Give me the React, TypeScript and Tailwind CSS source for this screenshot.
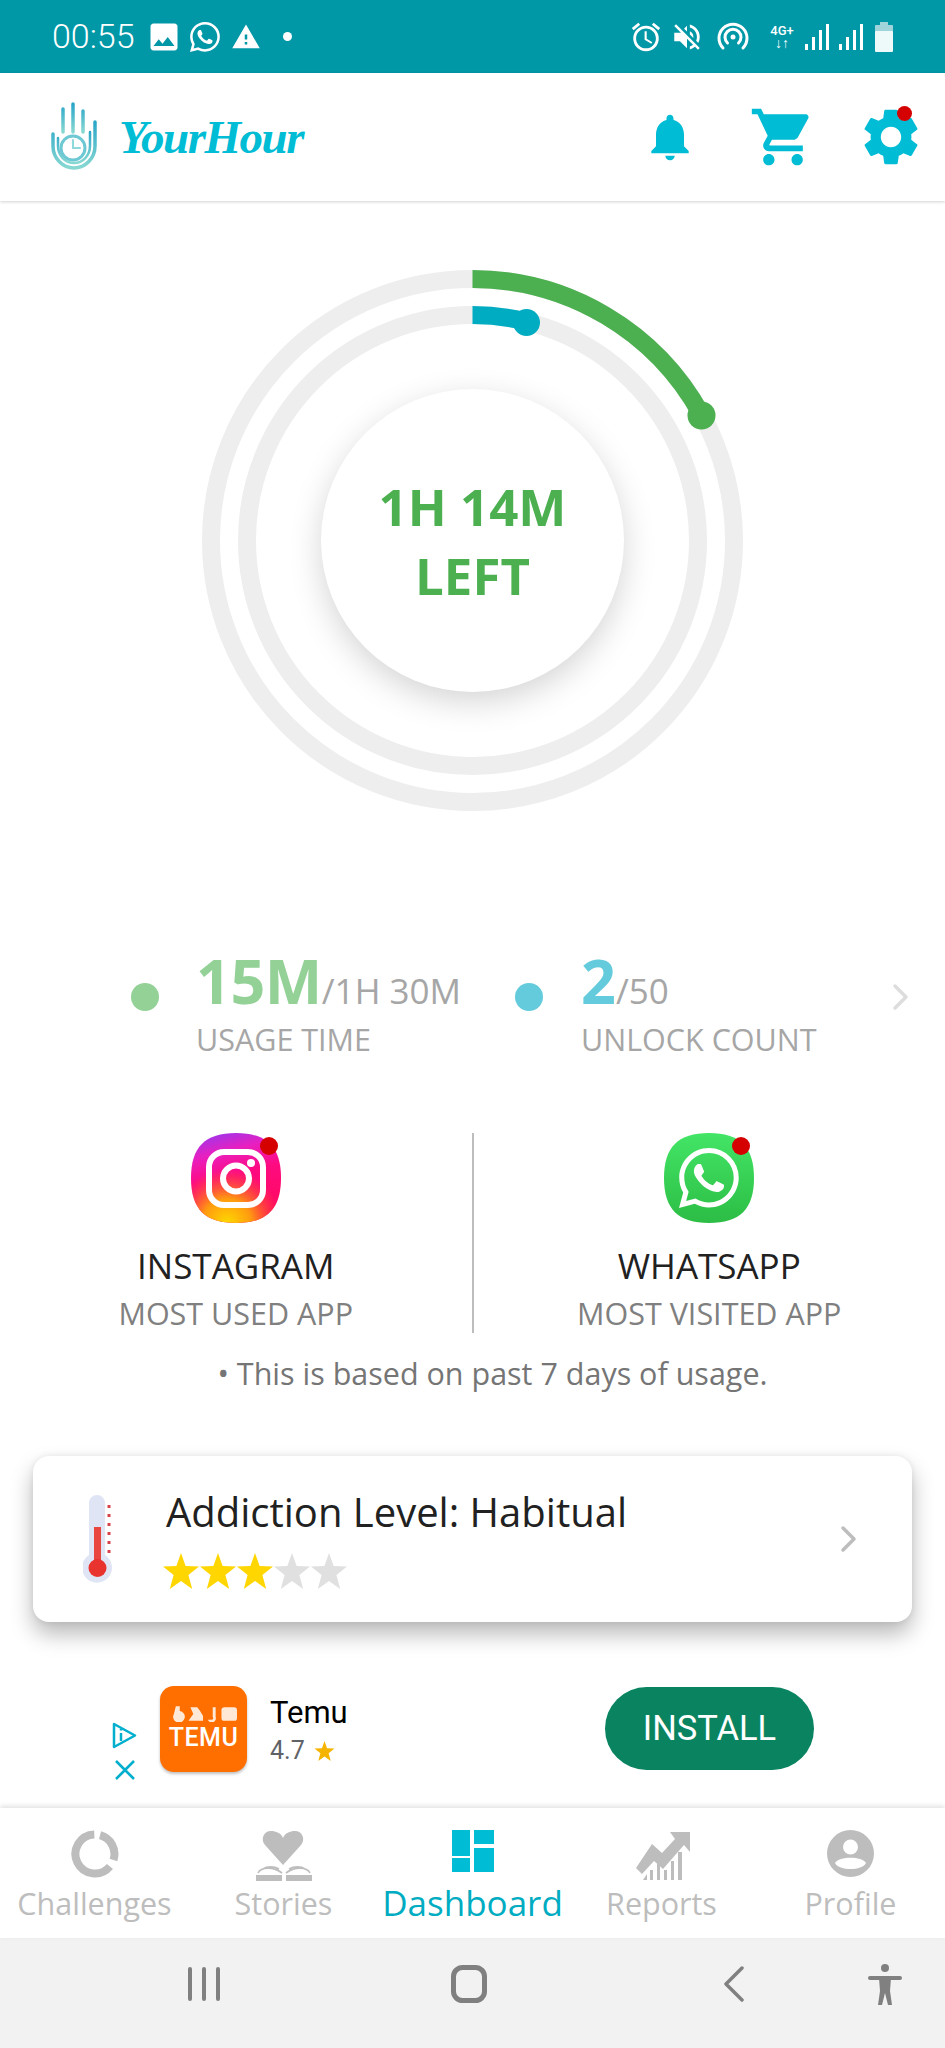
import { BsWhatsapp } from "react-icons/bs";
import {
  MdAccessAlarm,
  MdImage,
  MdNotifications,
  MdSettings,
  MdShoppingCart,
  MdVolumeOff,
  MdWarning,
} from "react-icons/md";

const Chevron = ({ color }: { color: string }) => (
  <svg width="18" height="28" viewBox="0 0 18 28" fill="none">
    <path d="M3 3 L14 14 L3 25" stroke={color} strokeWidth="3.5" strokeLinecap="round" strokeLinejoin="round" />
  </svg>
);

const Star = ({ color }: { color: string }) => (
  <svg width="38" height="36" viewBox="0 0 36 36" className="-mr-[1px] shrink-0">
    <polygon points="18,0 22.6,13 36,13.6 25.4,22 29.2,36 18,28 6.8,36 10.6,22 0,13.6 13.4,13" fill={color} />
  </svg>
);

function StatusBar() {
  return (
    <div className="h-[73px] bg-[#0097a7] flex items-center text-white shrink-0 pl-[52px] pr-[52px]">
      <span className="text-[34px] font-['Roboto',sans-serif] font-light w-[94px] whitespace-nowrap">00:55</span>
      <MdImage size={36} />
      <BsWhatsapp size={30} className="ml-[8px]" />
      <MdWarning size={30} className="ml-[11px]" />
      <span className="w-[9px] h-[9px] rounded-full bg-white ml-[22px]" />
      <div className="ml-auto flex items-center">
        <MdAccessAlarm size={34} />
        <MdVolumeOff size={34} className="ml-[7px]" />
        <svg width="34" height="30" viewBox="0 0 34 30" fill="none" stroke="white" strokeWidth="3" className="ml-[12px]">
          <path d="M7 26 A14 14 0 1 1 27 26" strokeLinecap="round" />
          <path d="M11.5 21 A8 8 0 1 1 22.5 21" strokeLinecap="round" />
          <circle cx="17" cy="15" r="2.5" fill="white" stroke="none" />
        </svg>
        <div className="ml-[17px] w-[30px] flex flex-col items-center font-['Roboto',sans-serif] leading-none">
          <span className="text-[13px] font-medium">4G+</span>
          <span className="text-[14px] font-bold leading-[13px]">↓↑</span>
        </div>
        <svg width="58" height="28" viewBox="0 0 58 28" fill="white" className="ml-[8px]">
          <rect x="0" y="21" width="3" height="6" />
          <rect x="7" y="14" width="3" height="13" />
          <rect x="14" y="7" width="3" height="20" />
          <rect x="21" y="1" width="3" height="26" />
          <rect x="34" y="21" width="3" height="6" />
          <rect x="41" y="14" width="3" height="13" />
          <rect x="48" y="7" width="3" height="20" />
          <rect x="55" y="1" width="3" height="26" />
        </svg>
        <svg width="18" height="30" viewBox="0 0 18 30" className="ml-[12px]">
          <rect x="5" y="0" width="8" height="4" fill="#9fd4da" />
          <rect x="0" y="3" width="18" height="7" rx="1" fill="#9fd4da" />
          <rect x="0" y="9" width="18" height="21" rx="1" fill="#eef9fa" />
        </svg>
      </div>
    </div>
  );
}

function Header() {
  return (
    <div className="relative z-10 h-[128px] shrink-0 bg-white flex items-center pl-[50px] pr-[20px] shadow-[0_1px_3px_rgba(0,0,0,0.18)]">
      <svg width="50" height="70" viewBox="0 0 50 70" fill="none" strokeLinecap="round" className="-mt-[1px]">
        <defs>
          <linearGradient id="hand" x1="0" y1="0" x2="0" y2="1">
            <stop offset="0" stopColor="#2aa6c8" />
            <stop offset="1" stopColor="#88d8d2" />
          </linearGradient>
        </defs>
        <g stroke="url(#hand)" strokeWidth="3.5">
          <path d="M13 7 V30 M23 2 V30 M33 9 V30" />
          <path d="M3 32 V44 A21 22 0 0 0 45 44 V20" />
          <path d="M8 36 V44 A16 17 0 0 0 40 44 V30" strokeWidth="2.5" />
        </g>
        <circle cx="23" cy="46" r="12" stroke="#6cc8d2" strokeWidth="3" />
        <path d="M23 38 V46 H30" stroke="#8fd8dc" strokeWidth="2" />
      </svg>
      <span className="ml-[19px] text-[#00bcd4] font-['Liberation_Serif',serif] italic font-bold text-[47px] leading-none tracking-[-1.5px]">
        YourHour
      </span>
      <div className="ml-auto flex items-center text-[#00bcd4]">
        <MdNotifications size={56} />
        <MdShoppingCart size={68} className="ml-[51px]" />
        <div className="relative ml-[40px]">
          <MdSettings size={68} />
          <span className="absolute top-[3px] right-[13px] w-[15px] h-[15px] rounded-full bg-[#d50000]" />
        </div>
      </div>
    </div>
  );
}

function Gauge() {
  return (
    <div className="relative w-[541px] h-[541px] mx-auto mt-[69px] shrink-0">
      <svg width="541" height="541" viewBox="0 0 541 541" fill="none">
        <circle cx="270.5" cy="270.5" r="261.5" stroke="#eeeeee" strokeWidth="18" />
        <circle cx="270.5" cy="270.5" r="225.5" stroke="#eeeeee" strokeWidth="18" />
        <path d="M270.5 9 A261.5 261.5 0 0 1 499.6 145" stroke="#4caf50" strokeWidth="18" />
        <circle cx="499.5" cy="145.5" r="14" fill="#4caf50" />
        <path d="M270.5 45 A225.5 225.5 0 0 1 324.4 51.6" stroke="#00acc1" strokeWidth="18" />
        <circle cx="324.5" cy="52.5" r="13.5" fill="#00acc1" />
      </svg>
      <div className="absolute left-[119px] top-[119px] w-[303px] h-[303px] rounded-full bg-white shadow-[0_10px_32px_rgba(0,0,0,0.17)] flex flex-col items-center justify-center text-[#4caf50] font-bold text-[51px] leading-[69px]">
        <span>1H 14M</span>
        <span>LEFT</span>
      </div>
    </div>
  );
}

function Stats() {
  return (
    <div className="flex mt-[138px] pl-[131px] pr-[35px] shrink-0">
      <div className="flex w-[384px]">
        <span className="w-[28px] h-[28px] rounded-full bg-[#93d197] mt-[34px] shrink-0" />
        <div className="ml-[37px]">
          <div className="h-[64px] leading-[64px] whitespace-nowrap">
            <span className="text-[61px] font-bold text-[#93d197] tracking-[-0.5px]">15M</span>
            <span className="text-[35px] text-[#a6a6a6]">/1H 30M</span>
          </div>
          <div className="mt-[6px] text-[30.5px] leading-[40px] text-[#a6a6a6] whitespace-nowrap">USAGE TIME</div>
        </div>
      </div>
      <div className="flex flex-1">
        <span className="w-[28px] h-[28px] rounded-full bg-[#63cbdb] mt-[34px] shrink-0" />
        <div className="ml-[38px]">
          <div className="h-[64px] leading-[64px] whitespace-nowrap">
            <span className="text-[61px] font-bold text-[#63cbdb]">2</span>
            <span className="text-[35px] text-[#a6a6a6]">/50</span>
          </div>
          <div className="mt-[6px] text-[30.5px] leading-[40px] text-[#a6a6a6] whitespace-nowrap">UNLOCK COUNT</div>
        </div>
      </div>
      <div className="mt-[34px] shrink-0">
        <Chevron color="#dddddd" />
      </div>
    </div>
  );
}

const squircle = "M45 0 C76 0 90 14 90 45 C90 76 76 90 45 90 C14 90 0 76 0 45 C0 14 14 0 45 0Z";

function InstagramIcon() {
  return (
    <svg width="90" height="90" viewBox="0 0 90 90" fill="none">
      <defs>
        <linearGradient id="ig" x1="0" y1="0" x2="0.25" y2="1">
          <stop offset="0" stopColor="#8b3cf5" />
          <stop offset="0.28" stopColor="#e81fc0" />
          <stop offset="0.55" stopColor="#ff0a80" />
          <stop offset="1" stopColor="#ff0a60" />
        </linearGradient>
        <radialGradient id="igglow" cx="0.4" cy="1" r="0.6">
          <stop offset="0" stopColor="#ffd800" />
          <stop offset="0.45" stopColor="#ff9a10" />
          <stop offset="1" stopColor="#ff5a20" stopOpacity="0" />
        </radialGradient>
      </defs>
      <path d={squircle} fill="url(#ig)" />
      <path d={squircle} fill="url(#igglow)" />
      <rect x="18" y="19" width="54" height="53" rx="15" stroke="white" strokeWidth="6" />
      <circle cx="45" cy="45.5" r="13" stroke="white" strokeWidth="6" />
      <circle cx="60" cy="30" r="4" fill="white" />
    </svg>
  );
}

function WhatsappIcon() {
  return (
    <div className="relative w-[90px] h-[90px]">
      <svg width="90" height="90" viewBox="0 0 90 90">
        <defs>
          <linearGradient id="wa" x1="0" y1="0" x2="0" y2="1">
            <stop offset="0" stopColor="#43e566" />
            <stop offset="1" stopColor="#2cbd45" />
          </linearGradient>
        </defs>
        <path d={squircle} fill="url(#wa)" />
      </svg>
      <BsWhatsapp size={60} className="absolute left-[15px] top-[15px] text-white" />
    </div>
  );
}

function AppColumn({
  icon,
  dotLeft,
  name,
  sub,
}: {
  icon: React.ReactNode;
  dotLeft: string;
  name: string;
  sub: string;
}) {
  return (
    <div className="flex-1 flex flex-col items-center">
      <div className="relative">
        {icon}
        <span className={`absolute top-[4px] ${dotLeft} w-[18px] h-[18px] rounded-full bg-[#d50000]`} />
      </div>
      <div className="mt-[21px] text-[35px] leading-[44px] text-[#212121]">{name}</div>
      <div className="mt-[5px] text-[30.5px] leading-[40px] text-[#808080] whitespace-nowrap">{sub}</div>
    </div>
  );
}

function TopApps() {
  return (
    <div className="flex mt-[74px] shrink-0">
      <AppColumn icon={<InstagramIcon />} dotLeft="left-[69px]" name="INSTAGRAM" sub="MOST USED APP" />
      <div className="w-[2px] bg-[#bdbdbd] shrink-0" />
      <AppColumn icon={<WhatsappIcon />} dotLeft="left-[68px]" name="WHATSAPP" sub="MOST VISITED APP" />
    </div>
  );
}

function Thermometer() {
  return (
    <svg width="30" height="92" viewBox="0 0 30 92">
      <path d="M7 10 A8 8 0 0 1 23 10 V62 A15 15 0 1 1 7 62Z" fill="#dfe5f5" transform="translate(-1 0)" />
      <rect x="11" y="34" width="7" height="34" fill="#e8463f" />
      <circle cx="14.5" cy="75" r="9" fill="#e8332f" />
      <path d="M26 12 V60" stroke="#d8424a" strokeWidth="3" strokeDasharray="3 6" />
    </svg>
  );
}

function AddictionCard() {
  return (
    <div className="mx-[33px] mt-[63px] h-[166px] shrink-0 rounded-[16px] bg-white flex items-start pl-[50px] pr-[54px] shadow-[0_12px_22px_rgba(0,0,0,0.28),0_0_6px_rgba(0,0,0,0.08)]">
      <div className="mt-[37px] shrink-0">
        <Thermometer />
      </div>
      <div className="ml-[49px] pt-[32px]">
        <div className="pl-[4px] text-[40px] leading-[48px] text-[#212121] whitespace-nowrap">Addiction Level: Habitual</div>
        <div className="flex mt-[17px]">
          <Star color="#ffd600" />
          <Star color="#ffd600" />
          <Star color="#ffd600" />
          <Star color="#e0e0e0" />
          <Star color="#e0e0e0" />
        </div>
      </div>
      <div className="ml-auto mt-[69px]">
        <Chevron color="#bdbdbd" />
      </div>
    </div>
  );
}

function TemuAd() {
  return (
    <div className="flex items-start mt-[64px] pl-[112px] pr-[131px] font-['Roboto',sans-serif] shrink-0">
      <div className="mt-[36px] w-[25px] flex flex-col items-center shrink-0">
        <svg width="25" height="27" viewBox="0 0 25 27" fill="none" stroke="#00aecd" strokeWidth="2.5">
          <path d="M2 2 L23 13.5 L2 25Z" strokeLinejoin="round" />
          <path d="M9 11 V19 M9 7 V8.5" strokeWidth="2.5" />
        </svg>
        <svg width="22" height="22" viewBox="0 0 22 22" stroke="#00aecd" strokeWidth="2.5" className="mt-[10px]">
          <path d="M2 2 L20 20 M20 2 L2 20" />
        </svg>
      </div>
      <div className="ml-[23px] w-[87px] h-[86px] rounded-[14px] bg-[#ff6f00] flex flex-col items-center justify-center shadow-[0_2px_3px_rgba(0,0,0,0.25)] shrink-0">
        <svg width="66" height="16" viewBox="0 0 68 16" fill="#ffe9d6">
          <path d="M5 0 H9 V5 A6 6 0 1 1 3 8Z" />
          <path d="M20 1 L27 1 L30 5 L33 10 V15 H18 L23 8Z" />
          <path d="M46 1 V11 A3 3 0 0 1 38 14 H42 A2 2 0 0 0 43 11 V1Z" />
          <rect x="52" y="1" width="16" height="14" rx="3" />
        </svg>
        <span className="text-white font-medium text-[25px] leading-[28px] mt-[2px] tracking-[0.5px]">TEMU</span>
      </div>
      <div className="ml-[23px]">
        <div className="mt-[9px] text-[31px] leading-[36px] font-normal text-black">Temu</div>
        <div className="mt-[5px] flex items-center text-[25px] leading-[30px] text-[#5f6368]">
          4.7
          <svg width="21" height="20" viewBox="0 0 36 36" className="ml-[9px]">
            <polygon points="18,0 22.6,13 36,13.6 25.4,22 29.2,36 18,28 6.8,36 10.6,22 0,13.6 13.4,13" fill="#f5b400" />
          </svg>
        </div>
      </div>
      <div className="ml-auto mt-[1px] w-[209px] h-[83px] rounded-full bg-[#0a8460] text-white text-[34.5px] flex items-center justify-center">
        INSTALL
      </div>
    </div>
  );
}

const ChallengesIcon = () => (
  <svg width="48" height="48" viewBox="0 0 48 48" fill="none" stroke="#bdbdbd" strokeWidth="8">
    <path d="M29.05 5.2 A19.5 19.5 0 0 1 42.5 30" />
    <path d="M38.9 36.5 A19.5 19.5 0 1 1 23.3 4.5" />
  </svg>
);

const StoriesIcon = () => (
  <svg width="58" height="52" viewBox="0 0 58 52" fill="#bdbdbd">
    <path d="M28 35 L10 15 C5 9 9 1 16 1 C21 1 26 3 28 8 C30 3 35 1 40 1 C47 1 51 9 46 15Z" />
    <path d="M1 45 H27 V51 H1Z M31 45 H57 V51 H31Z" />
    <path d="M3 43 C6 37 18 36 27 43 M31 43 C40 36 52 37 55 43 M8 39 C12 36 19 36 24 39 M34 39 C39 36 46 36 50 39" fill="none" stroke="#bdbdbd" strokeWidth="1.6" />
  </svg>
);

const DashboardIcon = () => (
  <svg width="42" height="42" viewBox="0 0 42 42" fill="#00bcd4">
    <rect x="0" y="0" width="18" height="26" />
    <rect x="0" y="28" width="18" height="14" />
    <rect x="22" y="0" width="20" height="14" />
    <rect x="22" y="18" width="20" height="24" />
  </svg>
);

const ReportsIcon = () => (
  <svg width="58" height="50" viewBox="0 0 56 50" fill="#bdbdbd">
    <path d="M2 38 L18 14 L28 23 L41 9 L36 2 H56 V22 L50 15 L29 39 L20 31 L8 44 Z" />
    <path d="M9 50 L13 44 V50Z M16 50 V40 H19 V50Z M23 50 V34 H26 V50Z M30 50 V40 H33 V50Z M37 50 V31 H40 V50Z M44 50 V22 H48 V50Z" />
  </svg>
);

const ProfileIcon = () => (
  <svg width="47" height="47" viewBox="0 0 47 47">
    <circle cx="23.5" cy="23.5" r="23.5" fill="#bdbdbd" />
    <circle cx="23.5" cy="17" r="7.5" fill="white" />
    <path d="M8 33 C12 26 35 26 39 33 C35 41 12 41 8 33Z" fill="white" />
  </svg>
);

const tabs = [
  { label: "Challenges", icon: <ChallengesIcon /> },
  { label: "Stories", icon: <StoriesIcon /> },
  { label: "Dashboard", icon: <DashboardIcon />, active: true },
  { label: "Reports", icon: <ReportsIcon /> },
  { label: "Profile", icon: <ProfileIcon /> },
];

function BottomNav() {
  return (
    <div className="relative h-[130px] shrink-0 bg-white grid grid-cols-5 shadow-[0_-2px_5px_rgba(0,0,0,0.12)]">
      {tabs.map((t) => (
        <div key={t.label} className="flex flex-col items-center">
          <div className="h-[52px] mt-[22px] flex items-start justify-center">{t.icon}</div>
          <span
            className={
              t.active
                ? "text-[35px] leading-[40px] mt-[1px] text-[#00acc1] whitespace-nowrap"
                : "text-[30.5px] leading-[40px] mt-[1px] text-[#bdbdbd] whitespace-nowrap"
            }
          >
            {t.label}
          </span>
        </div>
      ))}
    </div>
  );
}

function SystemBar() {
  return (
    <div className="h-[110px] shrink-0 bg-[#f2f2f2] flex items-center pb-[18px]">
      <div className="w-[314px] flex justify-end pr-[94px]">
        <svg width="32" height="34" viewBox="0 0 32 34" stroke="#808080" strokeWidth="4" strokeLinecap="round">
          <path d="M2 2 V32 M16 2 V32 M30 2 V32" />
        </svg>
      </div>
      <svg width="36" height="38" viewBox="0 0 36 38" fill="none" stroke="#808080" strokeWidth="5" className="ml-[137px]">
        <rect x="2.5" y="2.5" width="31" height="33" rx="9" />
      </svg>
      <svg width="22" height="36" viewBox="0 0 22 36" fill="none" stroke="#808080" strokeWidth="3.5" strokeLinecap="round" strokeLinejoin="round" className="ml-[236px]">
        <path d="M19 2 L3 18 L19 34" />
      </svg>
      <svg width="34" height="41" viewBox="0 0 34 41" fill="#808080" className="ml-[123px]">
        <circle cx="17" cy="4" r="4" />
        <rect x="0" y="12" width="34" height="4" rx="2" />
        <path d="M11 14 H23 L22 27 L24 41 H20 L17 29 L14 41 H10 L12 27Z" />
      </svg>
    </div>
  );
}

export default function App() {
  return (
    <div className="w-[945px] h-[2048px] overflow-hidden bg-white flex flex-col font-['Open_Sans',sans-serif]">
      <StatusBar />
      <Header />
      <div className="flex-1 flex flex-col min-h-0">
        <Gauge />
        <Stats />
        <TopApps />
        <div className="mt-[20px] text-center pl-[40px] text-[30.5px] leading-[40px] text-[#757575]">
          • This is based on past 7 days of usage.
        </div>
        <AddictionCard />
        <TemuAd />
      </div>
      <BottomNav />
      <SystemBar />
    </div>
  );
}
